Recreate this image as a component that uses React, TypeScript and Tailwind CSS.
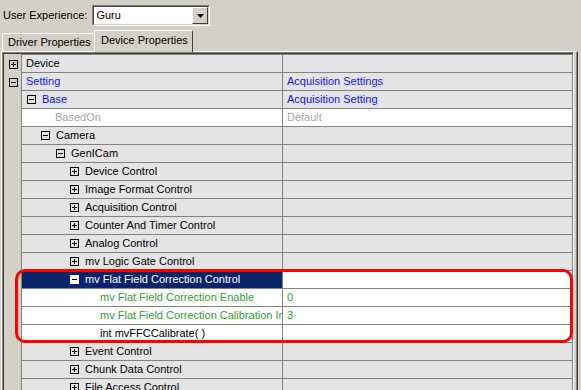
import React from 'react';

type Tone = 'normal' | 'blue' | 'grey' | 'green';

interface Row {
  label: string;
  level: number;
  open?: boolean;
  value?: string;
  tone?: Tone;
  white?: boolean;
  selected?: boolean;
}

const rows: Row[] = [
  { label: 'Device', level: 0, open: false },
  { label: 'Setting', level: 0, open: true, tone: 'blue', value: 'Acquisition Settings' },
  { label: 'Base', level: 1, open: true, tone: 'blue', value: 'Acquisition Setting' },
  { label: 'BasedOn', level: 2, tone: 'grey', value: 'Default', white: true },
  { label: 'Camera', level: 2, open: true },
  { label: 'GenICam', level: 3, open: true },
  { label: 'Device Control', level: 4, open: false },
  { label: 'Image Format Control', level: 4, open: false },
  { label: 'Acquisition Control', level: 4, open: false },
  { label: 'Counter And Timer Control', level: 4, open: false },
  { label: 'Analog Control', level: 4, open: false },
  { label: 'mv Logic Gate Control', level: 4, open: false },
  { label: 'mv Flat Field Correction Control', level: 4, open: true, selected: true },
  { label: 'mv Flat Field Correction Enable', level: 5, tone: 'green', value: '0', white: true },
  { label: 'mv Flat Field Correction Calibration Images', level: 5, tone: 'green', value: '3', white: true },
  { label: 'int mvFFCCalibrate( )', level: 5, white: true },
  { label: 'Event Control', level: 4, open: false },
  { label: 'Chunk Data Control', level: 4, open: false },
  { label: 'File Access Control', level: 4, open: false },
];

const toneClass: Record<Tone, string> = {
  normal: 'text-black',
  blue: 'text-[#1010ff]',
  grey: 'text-[#aaa698]',
  green: 'text-[#2ea32e]',
};

// left padding of the name cell when the row has a toggle box
const boxPad: Record<number, string> = {
  1: 'pl-[5px]',
  2: 'pl-[19px]',
  3: 'pl-[34px]',
  4: 'pl-[48px]',
};

// left padding of the name cell for rows without a box in the cell
const textPad: Record<number, string> = {
  0: 'pl-[4px]',
  2: 'pl-[33px]',
  5: 'pl-[78px]',
};

function Toggle({ open, inverted }: { open: boolean; inverted?: boolean }) {
  return (
    <span
      className={`relative inline-block w-[9px] h-[9px] shrink-0 border ${
        inverted ? 'bg-white border-white' : 'border-black'
      }`}
    >
      <span className="absolute left-[1px] top-[3px] w-[5px] h-px bg-black" />
      {!open && <span className="absolute left-[3px] top-[1px] w-px h-[5px] bg-black" />}
    </span>
  );
}

function GridRow({ row }: { row: Row }) {
  const hasBox = row.open !== undefined;
  const inCellBox = hasBox && row.level > 0;
  const pad = inCellBox ? boxPad[row.level] : textPad[row.level];
  const tone = row.selected ? 'text-white' : toneClass[row.tone ?? 'normal'];
  const cellBg = row.white ? 'bg-white' : 'bg-[#e4e4e4]';

  return (
    <div className="flex h-[18px]">
      <div className="w-[17px] shrink-0 flex items-center pl-[5px] bg-[#d4d0c8]">
        {hasBox && row.level === 0 && <Toggle open={row.open!} />}
      </div>
      <div
        className={`w-[261px] shrink-0 flex items-center border-l border-b border-[#828282] overflow-hidden whitespace-nowrap ${pad} ${
          row.selected ? 'bg-[#0a246a]' : cellBg
        }`}
      >
        {inCellBox && (
          <span className="mr-[6px] flex">
            <Toggle open={row.open!} inverted={row.selected} />
          </span>
        )}
        <span className={tone}>{row.label}</span>
      </div>
      <div
        className={`flex-1 flex items-center pl-[4px] border-l border-r border-b border-[#828282] whitespace-nowrap ${
          row.selected ? 'bg-white' : cellBg
        } ${toneClass[row.tone ?? 'normal']}`}
      >
        {row.value}
      </div>
    </div>
  );
}

export default function App() {
  return (
    <div className="relative w-[581px] h-[390px] overflow-hidden bg-[#d4d0c8] text-[11px] leading-none font-['Liberation_Sans',Arial,sans-serif] text-black">
      {/* user experience selector */}
      <div className="flex items-center pt-[5px] pl-[3px] h-[26px]">
        <span>User Experience:</span>
        <div className="ml-[5px] w-[118px] h-[21px] border border-[#808080] border-r-white border-b-white">
          <div className="h-full flex items-center border border-[#404040] border-r-[#d4d0c8] border-b-[#d4d0c8] bg-white">
            <span className="pl-[2px] flex-1">Guru</span>
            <div className="w-[16px] h-[17px] flex items-center justify-center bg-[#d4d0c8] border border-white border-r-[#404040] border-b-[#404040]">
              <svg width="7" height="4" viewBox="0 0 7 4">
                <path d="M0 0h7L3.5 4z" fill="#000" />
              </svg>
            </div>
          </div>
        </div>
      </div>

      {/* tabs */}
      <div className="flex items-end h-[25px] pl-[2px]">
        <div className="w-[92px] h-[18px] flex items-center pl-[5px] border-l border-t border-white rounded-tl-[2px]">
          Driver Properties
        </div>
        <div className="relative z-10 -mb-px w-[99px] h-[22px] flex items-center pl-[6px] pb-[2px] bg-[#d4d0c8] border-l border-t border-white border-r border-r-[#404040] rounded-t-[2px]">
          Device Properties
        </div>
      </div>

      {/* tab page */}
      <div className="ml-[1px] w-[577px] border-l border-t border-white border-r border-r-[#404040]">
        <div className="border-r border-r-[#808080]">
          <div className="w-[572px] border-l border-t border-[#808080] border-r border-r-white">
            <div className="border-l border-t border-[#404040]">
              <div className="border-t border-[#828282] ml-[17px]" />
              {rows.map((row, i) => (
                <GridRow key={i} row={row} />
              ))}
            </div>
          </div>
        </div>
      </div>

      {/* annotation */}
      <div className="absolute left-[15px] top-[269px] w-[558px] h-[74px] border-[3px] border-[#ff0000] rounded-[10px] pointer-events-none" />
    </div>
  );
}
